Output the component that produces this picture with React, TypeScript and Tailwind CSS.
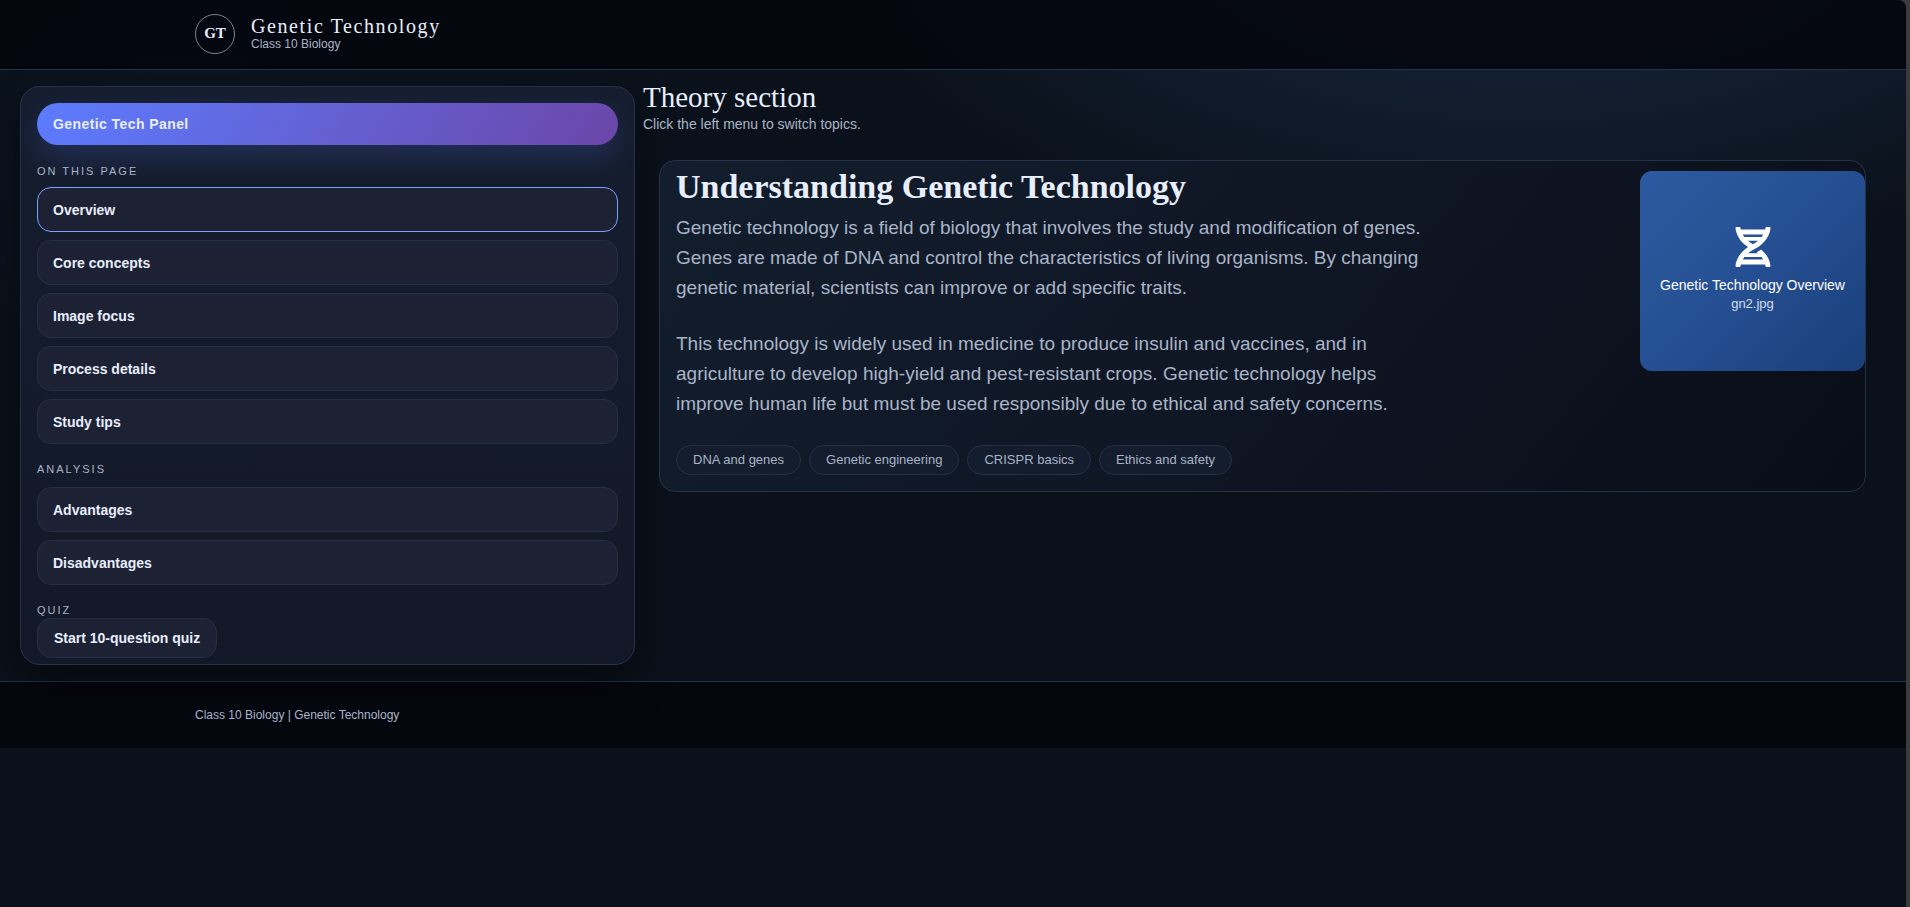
import { useState } from "react";
import { FaDna } from "react-icons/fa";

const pageLinks = [
  "Overview",
  "Core concepts",
  "Image focus",
  "Process details",
  "Study tips",
];

const analysisLinks = ["Advantages", "Disadvantages"];

const tags = [
  "DNA and genes",
  "Genetic engineering",
  "CRISPR basics",
  "Ethics and safety",
];

const serif = "font-['Liberation_Serif',serif]";

function TopicButton({
  label,
  active,
  onSelect,
}: {
  label: string;
  active: boolean;
  onSelect: (label: string) => void;
}) {
  return (
    <button
      type="button"
      onClick={() => onSelect(label)}
      className={`h-[45px] w-full rounded-[14px] border bg-[#1c2133] px-[15px] text-left text-sm font-bold text-[#e8eefc] ${
        active ? "border-[#7aa2ff]" : "border-[#223047]"
      }`}
    >
      {label}
    </button>
  );
}

function GroupLabel({ children }: { children: string }) {
  return (
    <h3 className="text-[11px] leading-4 tracking-[2px] text-[#a9b4c7] uppercase">
      {children}
    </h3>
  );
}

export default function App() {
  const [topic, setTopic] = useState("Overview");

  return (
    <div className="flex min-h-screen bg-[#3b3b3b] font-['Liberation_Sans',Arial,sans-serif] text-[#e8eefc]">
      <div className="mr-1 flex-1 overflow-hidden rounded-tr-lg bg-[#0a111a] bg-[radial-gradient(1200px_600px_at_80%_-10%,#1b2a44_0%,transparent_60%),radial-gradient(900px_500px_at_10%_10%,#0b141f_0%,transparent_60%)]">
        <header className="border-b border-[#253349] bg-[#04070e]/90">
          <div className="mx-auto flex h-[69px] max-w-[1516px] items-center gap-4 pb-0.5">
            <div
              className={`flex size-10 items-center justify-center rounded-full border border-[#7d828c] text-[15px] font-bold ${serif}`}
            >
              GT
            </div>
            <div>
              <div className={`text-xl leading-5 tracking-[0.08em] ${serif}`}>
                Genetic Technology
              </div>
              <div className="text-xs leading-4 text-[#a9b4c7]">
                Class 10 Biology
              </div>
            </div>
          </div>
        </header>

        <main className="flex items-start gap-2 py-4 pr-10 pl-5">
          <aside className="w-[615px] shrink-0 rounded-[20px] border border-[#253349] bg-linear-to-b from-[#151d2e] to-[#121828] px-4 pt-4 pb-1.5 shadow-[0_18px_40px_rgba(0,0,0,0.45)]">
            <div className="flex h-[42px] items-center rounded-[21px] bg-linear-[120deg,#5c7cff,#6b46a8] px-4 text-sm font-bold tracking-[0.03em] shadow-[0_12px_30px_rgba(92,124,255,0.2)]">
              Genetic Tech Panel
            </div>

            <div className="mt-[18px]">
              <GroupLabel>On this page</GroupLabel>
              <nav className="mt-2 flex flex-col gap-2">
                {pageLinks.map((label) => (
                  <TopicButton
                    key={label}
                    label={label}
                    active={topic === label}
                    onSelect={setTopic}
                  />
                ))}
              </nav>
            </div>

            <div className="mt-[17px]">
              <GroupLabel>Analysis</GroupLabel>
              <nav className="mt-[10px] flex flex-col gap-2">
                {analysisLinks.map((label) => (
                  <TopicButton
                    key={label}
                    label={label}
                    active={topic === label}
                    onSelect={setTopic}
                  />
                ))}
              </nav>
            </div>

            <div className="mt-[17px]">
              <GroupLabel>Quiz</GroupLabel>
              <a
                href="#quiz"
                className="inline-flex h-10 items-center rounded-[14px] border border-[#223047] bg-[#1c2133] px-4 text-sm font-bold"
              >
                Start 10-question quiz
              </a>
            </div>
          </aside>

          <section className="min-w-0 flex-1">
            <h1 className={`text-[29px] leading-[22px] ${serif}`}>
              Theory section
            </h1>
            <p className="mt-1.5 text-sm leading-5 text-[#a9b4c7]">
              Click the left menu to switch topics.
            </p>

            <article className="mt-[26px] ml-4 flex items-start justify-between rounded-2xl border border-[#253349] bg-linear-[130deg,#121e2d,#0f1624_50%,#090d17] pl-4">
              <div className="pt-1 pb-4">
                <h2 className={`text-[34px] leading-[44px] font-bold ${serif}`}>
                  Understanding Genetic Technology
                </h2>
                <p className="mt-1 max-w-[760px] text-[19px] leading-[30px] text-[#a9b4c7]">
                  Genetic technology is a field of biology that involves the
                  study and modification of genes. Genes are made of DNA and
                  control the characteristics of living organisms. By changing
                  genetic material, scientists can improve or add specific
                  traits.
                </p>
                <p className="mt-[26px] max-w-[760px] text-[19px] leading-[30px] text-[#a9b4c7]">
                  This technology is widely used in medicine to produce insulin
                  and vaccines, and in agriculture to develop high-yield and
                  pest-resistant crops. Genetic technology helps improve human
                  life but must be used responsibly due to ethical and safety
                  concerns.
                </p>
                <ul className="mt-[26px] flex gap-2 text-[13px] text-[#a9b4c7]">
                  {tags.map((tag) => (
                    <li
                      key={tag}
                      className="flex h-[30px] items-center rounded-full border border-[#223047] bg-[#131d2d] px-4"
                    >
                      {tag}
                    </li>
                  ))}
                </ul>
              </div>

              <figure className="mt-2.5 flex h-[200px] w-[225px] shrink-0 flex-col items-center justify-center rounded-xl bg-linear-[135deg,#2c5aa0,#254f92_50%,#1a3f7a] pb-0.5 text-sm text-white">
                <FaDna className="mb-2 size-10" />
                <figcaption className="text-center leading-5">
                  Genetic Technology Overview
                  <small className="block text-[13px] leading-[18px] text-white/80">
                    gn2.jpg
                  </small>
                </figcaption>
              </figure>
            </article>
          </section>
        </main>

        <footer className="border-t border-[#253349] bg-[#04070e]/90">
          <div className="mx-auto flex h-[66px] max-w-[1516px] items-center text-xs text-[#a9b4c7]">
            Class 10 Biology | Genetic Technology
          </div>
        </footer>
      </div>
    </div>
  );
}
